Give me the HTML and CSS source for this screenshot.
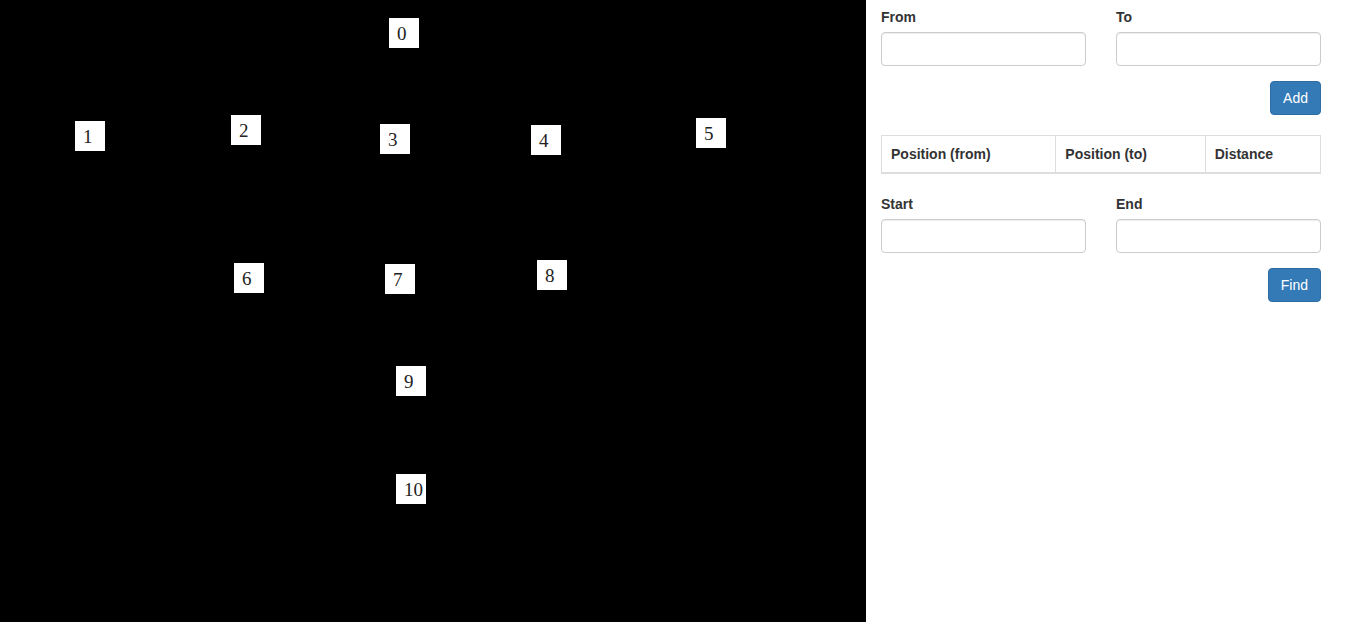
FILE: index.html
```html
<!DOCTYPE html>
<html>
<head>
<meta charset="utf-8">
<link rel="stylesheet" href="styles.css">
</head>
<body>
<div class="app">
  <div class="canvas">
    <div class="node" style="left:389px;top:18px">0</div>
    <div class="node" style="left:75px;top:121px">1</div>
    <div class="node" style="left:231px;top:115px">2</div>
    <div class="node" style="left:380px;top:124px">3</div>
    <div class="node" style="left:531px;top:125px">4</div>
    <div class="node" style="left:696px;top:118px">5</div>
    <div class="node" style="left:234px;top:263px">6</div>
    <div class="node" style="left:385px;top:264px">7</div>
    <div class="node" style="left:537px;top:260px">8</div>
    <div class="node" style="left:396px;top:366px">9</div>
    <div class="node" style="left:396px;top:474px">10</div>
  </div>
  <div class="panel">
    <div class="row">
      <div class="field">
        <label>From</label>
        <input class="input" type="text">
      </div>
      <div class="field">
        <label>To</label>
        <input class="input" type="text">
      </div>
    </div>
    <div class="actions"><button class="btn">Add</button></div>
    <table class="table">
      <thead>
        <tr>
          <th class="c1">Position (from)</th>
          <th class="c2">Position (to)</th>
          <th class="c3">Distance</th>
        </tr>
      </thead>
    </table>
    <div class="row">
      <div class="field">
        <label>Start</label>
        <input class="input" type="text">
      </div>
      <div class="field">
        <label>End</label>
        <input class="input" type="text">
      </div>
    </div>
    <div class="actions"><button class="btn">Find</button></div>
  </div>
</div>
</body>
</html>
```
FILE: styles.css
```css
html, body {
  margin: 0;
  padding: 0;
  background: #fff;
}
body {
  font-family: "Liberation Sans", Arial, sans-serif;
  font-size: 14px;
  line-height: 20px;
  color: #333;
}
.app {
  display: flex;
  height: 622px;
  overflow: hidden;
}
.canvas {
  position: relative;
  width: 866px;
  height: 622px;
  background: #000;
  flex: none;
}
.node {
  position: absolute;
  width: 30px;
  height: 30px;
  background: #fff;
  color: #222;
  font-family: "Liberation Serif", "DejaVu Serif", serif;
  font-size: 19px;
  line-height: 32px;
  padding-left: 8px;
  box-sizing: border-box;
  white-space: nowrap;
}
.panel {
  width: 440px;
  flex: none;
  padding: 7px 0 0 15px;
}
.row {
  display: flex;
  gap: 30px;
}
.field {
  width: 205px;
  display: flex;
  flex-direction: column;
  margin-bottom: 15px;
}
.field label {
  font-weight: bold;
  margin-bottom: 5px;
  display: block;
}
.input {
  height: 34px;
  box-sizing: border-box;
  border: 1px solid #ccc;
  border-radius: 4px;
  box-shadow: inset 0 1px 1px rgba(0,0,0,.075);
  padding: 6px 12px;
  font-size: 14px;
  font-family: inherit;
  margin: 0;
  width: 100%;
}
.actions {
  display: flex;
  justify-content: flex-end;
}
.btn {
  height: 34px;
  padding: 6px 12px;
  background: #337ab7;
  border: 1px solid #2e6da4;
  border-radius: 4px;
  color: #fff;
  font-family: inherit;
  font-size: 14px;
  line-height: 20px;
  margin: 0;
}
.table {
  width: 440px;
  border-collapse: collapse;
  margin: 20px 0 20px;
  border: 1px solid #ddd;
  table-layout: fixed;
}
.table th {
  text-align: left;
  font-weight: bold;
  padding: 8px 8px 8px 9px;
  line-height: 20px;
  border: 1px solid #ddd;
  border-bottom: 2px solid #ddd;
}
.c1 { width: 40.5%; }
.c2 { width: 34.1%; }
.c3 { width: 25.4%; }
```
